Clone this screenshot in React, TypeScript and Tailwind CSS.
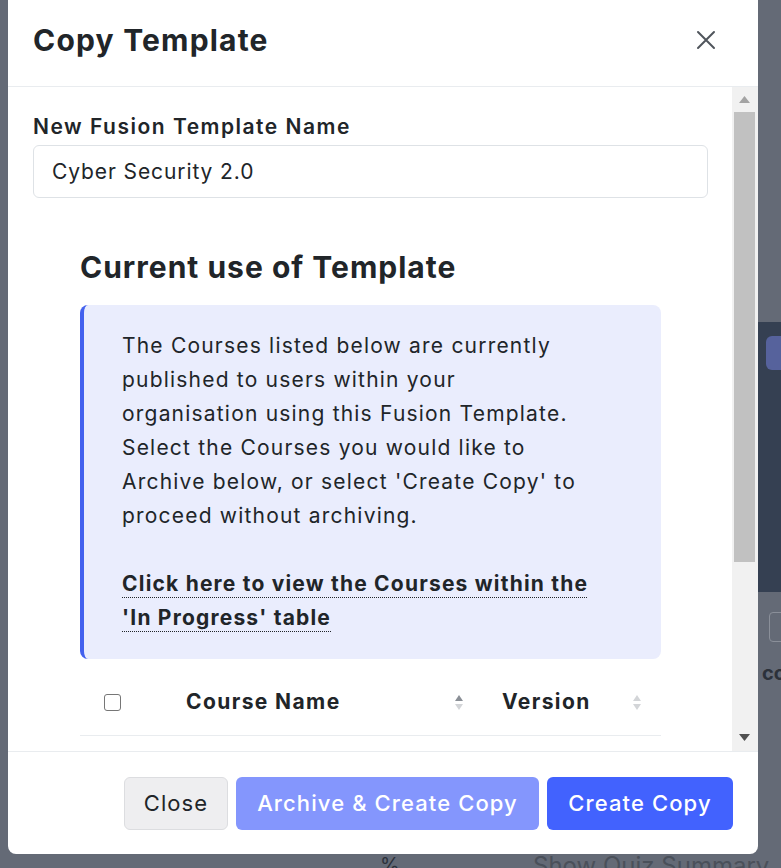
const FONT = "font-['Inter','Liberation_Sans',sans-serif]";

function SortArrows({ active }: { active?: boolean }) {
  return (
    <span className="flex flex-col items-center gap-[3px]">
      <svg width="8" height="6" viewBox="0 0 8 6">
        <path d="M4 0 L8 6 L0 6 Z" fill={active ? '#8a8f96' : '#d3d5d8'} />
      </svg>
      <svg width="8" height="6" viewBox="0 0 8 6">
        <path d="M0 0 L8 0 L4 6 Z" fill="#d3d5d8" />
      </svg>
    </span>
  );
}

export default function App() {
  return (
    <div className={`relative h-[868px] w-full overflow-hidden bg-[#646a76] ${FONT}`}>
      {/* page behind the overlay */}
      <div className="absolute right-0 top-[322px] h-[270px] w-[23px] bg-[#354052]">
        <div className="ml-[8px] mt-[14px] h-[34px] w-[30px] rounded-md bg-[#56629c]" />
      </div>
      <div className="absolute right-[-10px] top-[612px] h-[30px] w-[22px] rounded border border-[#8a8f99]" />
      <div className="absolute left-[762px] top-[658px] text-[20px] font-bold text-[#2c313a]">co</div>
      <div className="absolute left-[380px] top-[850px] text-[20px] text-[#2c313a]">%</div>
      <div className="absolute left-[533px] top-[848px] text-[24px] text-[#4a505a]">Show Quiz Summary</div>

      {/* modal */}
      <div className="absolute left-2 top-0 flex h-[854px] w-[750px] flex-col overflow-hidden rounded-b-lg bg-white text-[#212529]">
        <div className="flex h-[87px] shrink-0 items-center justify-between border-b border-[#e9ecef] pb-[6px] pl-[25px] pr-[42px]">
          <h1 className="text-[30px] font-bold tracking-[1.2px]">Copy Template</h1>
          <svg width="20" height="20" viewBox="0 0 20 20">
            <path d="M2 2 L18 18 M18 2 L2 18" stroke="#50555c" strokeWidth="2" strokeLinecap="round" />
          </svg>
        </div>

        <div className="flex min-h-0 flex-1">
          <div className="flex-1 overflow-hidden pl-[25px] pr-[24px] pt-[26px]">
            <label className="mb-[4px] block text-[21px] font-semibold leading-[28px] tracking-[1.5px]">
              New Fusion Template Name
            </label>
            <div className="flex h-[53px] items-center rounded-md border border-[#dee2e6] px-[18px] text-[21px] tracking-[0.9px]">
              Cyber Security 2.0
            </div>

            <div className="mx-[47px] mt-[50px]">
              <h2 className="mb-[19px] text-[30px] font-bold leading-[38px] tracking-[1px]">Current use of Template</h2>
              <div className="rounded-lg border-l-4 border-[#4361ee] bg-[#eaedfd] py-[24px] pl-[38px] pr-[70px] text-[21px] leading-[34px] tracking-[1.2px]">
                <p>
                  The Courses listed below are currently published to users within your organisation using this Fusion
                  Template. Select the Courses you would like to Archive below, or select 'Create Copy' to proceed without
                  archiving.
                </p>
                <p className="mt-[34px] font-bold tracking-[1.2px]">
                  <span className="underline decoration-dotted decoration-1 underline-offset-[6px]">
                    Click here to view the Courses within the 'In Progress' table
                  </span>
                </p>
              </div>

              <div className="mt-[10px] flex h-[67px] items-center border-b border-[#e9ecef] text-[21px] font-bold tracking-[1.4px]">
                <div className="flex w-[65px] justify-center">
                  <span className="h-[17px] w-[17px] rounded-[3px] border border-[#767676] bg-white" />
                </div>
                <div className="flex flex-1 items-center justify-between pl-[41px] pr-[16px]">
                  <span>Course Name</span>
                  <SortArrows active />
                </div>
                <div className="flex w-[182px] items-center justify-between pl-[23px] pr-[20px]">
                  <span>Version</span>
                  <SortArrows />
                </div>
              </div>
            </div>
          </div>

          {/* scrollbar */}
          <div className="flex w-[26px] shrink-0 flex-col items-center bg-[#f1f1f1] pl-[2px] pr-[3px]">
            <div className="flex h-[25px] items-center justify-center">
              <svg width="11" height="7" viewBox="0 0 11 7">
                <path d="M5.5 0 L11 7 L0 7 Z" fill="#a3a3a3" />
              </svg>
            </div>
            <div className="h-[450px] w-full bg-[#c1c1c1]" />
            <div className="flex-1" />
            <div className="flex h-[28px] items-center justify-center">
              <svg width="11" height="7" viewBox="0 0 11 7">
                <path d="M0 0 L11 0 L5.5 7 Z" fill="#505050" />
              </svg>
            </div>
          </div>
        </div>

        <div className="flex h-[103px] shrink-0 items-center justify-end gap-[8px] border-t border-[#e9ecef] pr-[25px]">
          <button className="h-[53px] w-[104px] rounded-md border border-[#dcdde0] bg-[#eeeef0] text-[22px] tracking-[1.1px] text-[#212529]">
            Close
          </button>
          <button className="h-[53px] w-[303px] rounded-md bg-[#8496fd] text-[22px] font-medium tracking-[1.1px] text-white">
            Archive &amp; Create Copy
          </button>
          <button className="h-[53px] w-[186px] rounded-md bg-[#4262fe] text-[22px] font-medium tracking-[1.1px] text-white">
            Create Copy
          </button>
        </div>
      </div>
    </div>
  );
}
